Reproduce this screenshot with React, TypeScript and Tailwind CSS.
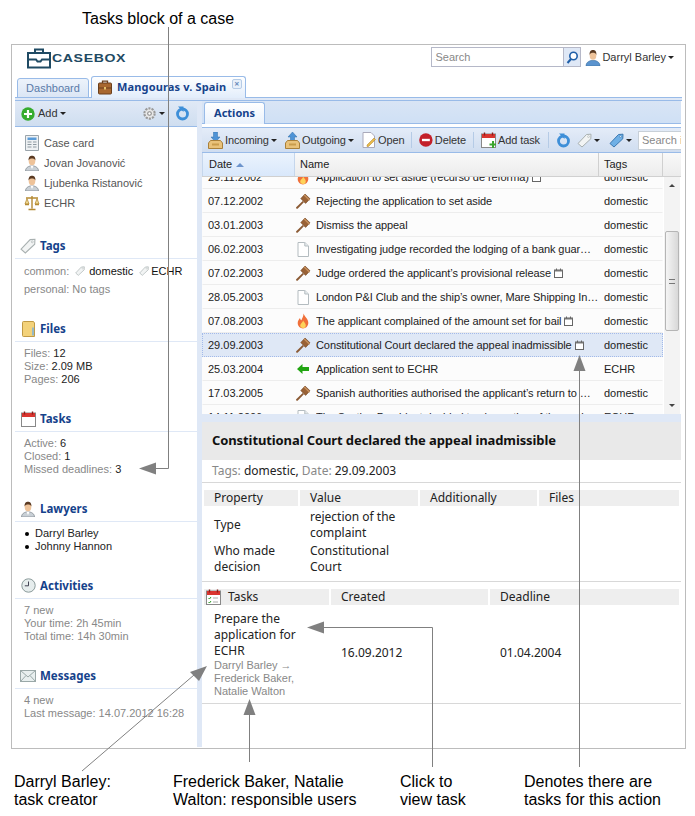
import type { ReactNode } from "react";

const Caret = () => <span className="inline-block ml-[2px] w-0 h-0 border-x-[3px] border-x-transparent border-t-[3px] border-t-[#222] align-middle shrink-0" />;

const Person = ({ s = 16 }: { s?: number }) => (
  <svg width={s} height={s} viewBox="0 0 16 16" className="shrink-0">
    <path d="M1.500 16c0-3 2-4.200 4.500-5h4c2.500.8 4.500 2 4.500 5z" fill="#c9d0d6" stroke="#7d858c" strokeWidth=".7" />
    <path d="M6.500 11l1.500 3 1.500-3z" fill="#fff" />
    <ellipse cx="8" cy="6" rx="3.300" ry="4.200" fill="#eec39a" />
    <path d="M4.600 5.500C4.400 2 6 .8 8 .8s3.600 1.200 3.400 4.700C10.800 3.800 9.500 3.400 8 3.400s-2.800.4-3.400 2.100z" fill="#5a3a22" />
  </svg>
);
const BluePerson = () => (
  <svg width="16" height="17" viewBox="0 0 16 17" className="shrink-0">
    <path d="M1 17c0-3.300 2.300-4.700 5-5.500h4c2.700.8 5 2.200 5 5.500z" fill="#5b94cf" stroke="#3d6e9f" strokeWidth=".6" />
    <ellipse cx="8" cy="6.500" rx="3.300" ry="4.300" fill="#eec39a" />
    <path d="M4.600 6C4.400 2.200 6 1 8 1s3.600 1.200 3.400 5C10.800 4.200 9.500 3.800 8 3.800S5.200 4.200 4.600 6z" fill="#5a3a22" />
  </svg>
);
const Gavel = () => (
  <svg width="16" height="16" viewBox="0 0 16 16" className="shrink-0">
    <path d="M1.200 14.200l6.500-6.200 1.200 1.300-6.300 6.400c-.8.600-1.900-.6-1.400-1.500z" fill="#8b5a34" />
    <path d="M5.800 5.600L10 1l5 4.800-4.400 4.600z" fill="#9a6236" stroke="#6e4122" strokeWidth=".6" />
    <path d="M9 1.800l5.600 5.400" stroke="#c99461" strokeWidth="1.200" />
  </svg>
);
const Doc = () => (
  <svg width="12" height="15" viewBox="0 0 12 15" className="shrink-0">
    <path d="M1 .5h6.800L11.500 4v10.500H1z" fill="#fff" stroke="#b4bcc0" />
    <path d="M7.800 .5V4h3.700" fill="#e5ebee" stroke="#b4bcc0" />
  </svg>
);
const Flame = () => (
  <svg width="12" height="16" viewBox="0 0 12 16" className="shrink-0">
    <path d="M6.500 .5c.8 3 4.800 5 4.800 9.300 0 3.500-2.500 5.700-5.300 5.700S.7 13.300.7 10.100C.7 7.800 2 6.500 3 5c.2 1.300.7 2 1.400 2.300C5 5.300 6.600 3.500 6.500 .5z" fill="#f0703a" />
    <path d="M6.200 7.500c.6 1.600 2.600 2.700 2.600 4.900 0 1.600-1.200 2.600-2.800 2.600s-2.800-1-2.800-2.500c0-1.800 2.600-3 3-5z" fill="#fdd35a" />
  </svg>
);
const GreenArrow = () => (
  <svg width="12" height="10" viewBox="0 0 12 10" className="shrink-0">
    <path d="M0 5l5.500-5v3H12v4H5.500v3z" fill="#22a512" />
  </svg>
);
const MiniCal = () => (
  <svg width="9" height="10" viewBox="0 0 9 10" className="shrink-0">
    <rect x=".5" y="2" width="8" height="7.500" fill="#fff" stroke="#666" />
    <path d="M.5 2h8v1.500h-8z" fill="#777" />
    <path d="M2.500 .5v2M6.500 .5v2" stroke="#666" />
  </svg>
);
const Calendar = ({ badge, check }: { badge?: boolean; check?: boolean }) => (
  <svg width="15" height="16" viewBox="0 0 15 16" className="shrink-0">
    <rect x=".5" y="2" width="14" height="13.500" fill="#fff" stroke="#888" />
    <rect x="1" y="2" width="13" height="4" fill="#d9352f" />
    <path d="M3.500 .5v3M11.500 .5v3" stroke="#8a1f1b" strokeWidth="1.400" />
    {check && <path d="M2.500 9l1 1 1.500-2M2.500 13l1 1 1.500-2" stroke="#2a9a22" fill="none" />}
    {check && <path d="M7 9h5M7 13h5" stroke="#aaa" />}
    {badge && <path d="M11 9h2v2.500h2v2h-2V16h-2v-2.500H8.500v-2H11z" fill="#3aa52e" />}
  </svg>
);
const Refresh = () => (
  <svg width="15" height="15" viewBox="0 0 15 15" className="shrink-0">
    <circle cx="7.500" cy="8" r="5" fill="none" stroke="#3e8fd8" strokeWidth="2.800" />
    <path d="M3 .5h5.500v5.500z" fill="#3e8fd8" />
  </svg>
);
const TagIcon = ({ fill = "#f2f4f4", stroke = "#a8b0b0", s = 15 }: { fill?: string; stroke?: string; s?: number }) => (
  <svg width={s} height={s} viewBox="0 0 15 15" className="shrink-0">
    <path d="M1 10.500L9.500 1.500 14 1.200l-.2 4.600L5 14z" fill={fill} stroke={stroke} />
    <circle cx="11.500" cy="3.600" r=".9" fill="#fff" stroke={stroke} strokeWidth=".6" />
  </svg>
);
const Tray = ({ up }: { up?: boolean }) => (
  <svg width="15" height="17" viewBox="0 0 15 17" className="shrink-0">
    <path d={up ? "M7.500 0L12 5H9.500v5h-4V5H3z" : "M5.500 0h4v5H12l-4.500 5L3 5h2.500z"} fill="#4e93d6" stroke="#2f6ea8" strokeWidth=".5" />
    <path d="M.5 11l2-2.500h10l2 2.500v5.500H.5z" fill="#e9c27a" stroke="#a9803a" />
    <path d="M4 11.500h7v2H4z" fill="#c99c4c" />
  </svg>
);
const CaseIcon = () => (
  <svg width="14" height="16" viewBox="0 0 14 16" className="shrink-0">
    <path d="M.5 .5h13v15H.5z" fill="#eef1f3" stroke="#9aa4ab" />
    <path d="M2.500 2.500h9v2.500h-9z" fill="#5a9bd8" />
    <path d="M2.500 7h4M8 7h3.500M2.500 9.500h4M8 9.500h3.500M2.500 12h4M8 12h3.500" stroke="#8f9aa1" />
  </svg>
);
const Scales = () => (
  <svg width="16" height="16" viewBox="0 0 16 16" className="shrink-0">
    <path d="M8 1v12.500M4.500 14.500h7M2 3h12" stroke="#b58a33" strokeWidth="1.400" fill="none" />
    <path d="M3 3.500L1 9h4zM13 3.500L11 9h4z" fill="#f0dc9a" stroke="#b58a33" strokeWidth=".8" />
    <path d="M1 9.500h4M11 9.500h4" stroke="#b58a33" strokeWidth="1.400" />
  </svg>
);
const Folder = () => (
  <svg width="13" height="16" viewBox="0 0 13 16" className="shrink-0">
    <path d="M.5 1.500a1 1 0 011-1h10l1 1.500v13.500h-11a1 1 0 01-1-1z" fill="#f3d27a" stroke="#c09a45" />
    <path d="M11 6.500v8" stroke="#7fb3d9" strokeWidth="1.600" />
  </svg>
);
const Clock = () => (
  <svg width="15" height="15" viewBox="0 0 15 15" className="shrink-0">
    <circle cx="7.500" cy="7.500" r="6.700" fill="#e6eded" stroke="#8a9a9a" />
    <path d="M7.500 3.500v4.300H3.800" stroke="#445" fill="none" />
  </svg>
);
const Mail = () => (
  <svg width="16" height="12" viewBox="0 0 16 12" className="shrink-0">
    <rect x=".5" y=".5" width="15" height="11" fill="#e8efef" stroke="#9aa8a8" />
    <path d="M.5 .5L8 7l7.500-6.500M.5 11.500L6 5.500M15.500 11.500L10 5.500" fill="none" stroke="#9aa8a8" />
  </svg>
);
const Gear = () => (
  <svg width="15" height="15" viewBox="0 0 14 14" className="shrink-0">
    <circle cx="7" cy="7" r="4.800" fill="#e8e8e8" stroke="#9a9a9a" strokeWidth="2" strokeDasharray="2 1" />
    <circle cx="7" cy="7" r="1.700" fill="#fff" stroke="#888" />
  </svg>
);
const AddIcon = () => (
  <svg width="14" height="14" viewBox="0 0 14 14" className="shrink-0">
    <circle cx="7" cy="7" r="6.700" fill="#36ac2e" />
    <path d="M7 3v8M3 7h8" stroke="#fff" strokeWidth="2.200" />
  </svg>
);
const Briefcase = () => (
  <svg width="14" height="15" viewBox="0 0 14 15" className="shrink-0">
    <path d="M4.500 3V1.200h5V3" fill="none" stroke="#6b3f1c" strokeWidth="1.300" />
    <rect x=".5" y="3" width="13" height="11" rx="1" fill="#a8672f" stroke="#6b3f1c" />
    <path d="M.5 8h13" stroke="#6b3f1c" />
    <rect x="6" y="7" width="2" height="2.500" fill="#e5c16b" />
  </svg>
);
const Logo = () => (
  <svg width="24" height="21" viewBox="0 0 24 21" className="shrink-0">
    <path d="M8 5V1.500h8V5" fill="none" stroke="#1f4a63" strokeWidth="2" />
    <rect x="1" y="5" width="22" height="14.500" fill="#fff" stroke="#1f4a63" strokeWidth="2" />
    <path d="M1 11.500h8l1.500 2h3l1.500-2h8" fill="none" stroke="#1f4a63" strokeWidth="2" />
  </svg>
);

const SectionHead = ({ icon, title, mt }: { icon: ReactNode; title: string; mt: string }) => (
  <div className={`${mt} h-[25px] flex items-center border-b border-[#dfe8f6] pb-[1px]`}>
    <span className="w-[20px] ml-[3px] flex justify-center shrink-0">{icon}</span>
    <span className="ml-[2px] text-[11.500px] font-bold text-[#15428b] font-['Noto_Sans',sans-serif]">{title}</span>
  </div>
);

const Stat = ({ k, v }: { k: string; v?: string }) => (
  <div className="h-[13px] leading-[13px] whitespace-nowrap">
    <span className="text-[#888]">{k}</span>
    {v && <span className="text-[#222]"> {v}</span>}
  </div>
);

const LeftPanel = () => (
  <div className="w-[182px] shrink-0 flex flex-col text-[11px] font-['Liberation_Sans',sans-serif]">
    <div className="h-[26px] flex items-center pl-[6px] pr-[7px] bg-gradient-to-b from-[#e0e9f6] to-[#cfdef0] border-b border-[#99bbe8]">
      <AddIcon />
      <span className="ml-[3px] text-[#333]">Add</span>
      <Caret />
      <span className="ml-auto flex items-center"><Gear /><Caret /></span>
      <span className="ml-[10px]"><Refresh /></span>
    </div>
    <div className="pt-[6px] text-[#555]">
      {[
        [<CaseIcon />, "Case card"],
        [<Person />, "Jovan Jovanović"],
        [<Person />, "Ljubenka Ristanović"],
        [<Scales />, "ECHR"],
      ].map(([icon, label], i) => (
        <div key={i} className="h-[20px] flex items-center pl-[9px]">
          <span className="w-[16px] flex justify-center">{icon}</span>
          <span className="ml-[4px]">{label}</span>
        </div>
      ))}
    </div>
    <SectionHead mt="mt-[21px]" icon={<TagIcon s={16} />} title="Tags" />
    <div className="pl-[9px] pt-[3px] h-[38px] text-[#888]">
      <div className="h-[18px] flex items-center">
        <span>common:</span>
        <span className="ml-[6px]"><TagIcon s={10} /></span>
        <span className="ml-[4px] text-[#111]">domestic</span>
        <span className="ml-[6px]"><TagIcon s={10} /></span>
        <span className="ml-[2px] text-[#111]">ECHR</span>
      </div>
      <div className="h-[18px] leading-[18px]">personal: No tags</div>
    </div>
    <SectionHead mt="mt-[20px]" icon={<Folder />} title="Files" />
    <div className="pl-[9px] pt-[5px] pb-[1px]">
      <Stat k="Files:" v="12" />
      <Stat k="Size:" v="2.09 MB" />
      <Stat k="Pages:" v="206" />
    </div>
    <SectionHead mt="mt-[20px]" icon={<Calendar />} title="Tasks" />
    <div className="pl-[9px] pt-[5px] pb-[1px]">
      <Stat k="Active:" v="6" />
      <Stat k="Closed:" v="1" />
      <Stat k="Missed deadlines:" v="3" />
    </div>
    <SectionHead mt="mt-[20px]" icon={<Person />} title="Lawyers" />
    <div className="pl-[10px] pt-[5px] pb-[1px] text-[#222]">
      {["Darryl Barley", "Johnny Hannon"].map((n) => (
        <div key={n} className="h-[13px] flex items-center">
          <span className="w-[4px] h-[4px] rounded-full bg-black mr-[6px]" />
          {n}
        </div>
      ))}
    </div>
    <SectionHead mt="mt-[20px]" icon={<Clock />} title="Activities" />
    <div className="pl-[9px] pt-[5px] pb-[1px]">
      <Stat k="7 new" />
      <Stat k="Your time: 2h 45min" />
      <Stat k="Total time: 14h 30min" />
    </div>
    <SectionHead mt="mt-[20px]" icon={<Mail />} title="Messages" />
    <div className="pl-[9px] pt-[5px] pb-[1px]">
      <Stat k="4 new" />
      <Stat k="Last message: 14.07.2012 16:28" />
    </div>
  </div>
);

const rows: [string, ReactNode, string, boolean, string][] = [
  ["29.11.2002", <Flame />, "Application to set aside (recurso de reforma)", true, "domestic"],
  ["07.12.2002", <Gavel />, "Rejecting the application to set aside", false, "domestic"],
  ["03.01.2003", <Gavel />, "Dismiss the appeal", false, "domestic"],
  ["06.02.2003", <Doc />, "Investigating judge recorded the lodging of a bank guar…", false, "domestic"],
  ["07.02.2003", <Gavel />, "Judge ordered the applicant’s provisional release", true, "domestic"],
  ["28.05.2003", <Doc />, "London P&I Club and the ship’s owner, Mare Shipping In…", false, "domestic"],
  ["07.08.2003", <Flame />, "The applicant complained of the amount set for bail", true, "domestic"],
  ["29.09.2003", <Gavel />, "Constitutional Court declared the appeal inadmissible", true, "domestic"],
  ["25.03.2004", <GreenArrow />, "Application sent to ECHR", false, "ECHR"],
  ["17.03.2005", <Gavel />, "Spanish authorities authorised the applicant’s return to …", false, "domestic"],
  ["14.11.2006", <Doc />, "The Section President decided to give notice of the appl…", false, "ECHR"],
];

const Tool = ({ icon, label, caret, cls }: { icon: ReactNode; label?: string; caret?: boolean; cls: string }) => (
  <div className={`${cls} flex items-center text-[#333] shrink-0 whitespace-nowrap`}>
    {icon}
    {label && <span className="ml-[2px] tracking-[-0.1px]">{label}</span>}
    {caret && <Caret />}
  </div>
);
const Sep = ({ cls }: { cls: string }) => <span className={`${cls} w-[1px] h-[16px] bg-[#b5cbe6] shrink-0`} />;

const ActionsGrid = () => (
  <div className="text-[11px] font-['Liberation_Sans',sans-serif]">
    <div className="h-[23px] flex items-end pl-[2px] bg-gradient-to-b from-[#d9e5f5] to-[#cfe0f5] border-b border-[#99bbe8]">
      <div className="w-[61px] h-[22px] -mb-[1px] rounded-t-[3px] border border-b-0 border-[#99bbe8] bg-gradient-to-b from-white to-[#eaf2fc] flex items-center justify-center font-bold text-[#15428b] font-['Noto_Sans',sans-serif]">Actions</div>
    </div>
    <div className="mt-[3px] h-[26px] flex items-center pl-[6px] overflow-hidden bg-gradient-to-b from-[#e4ecf8] to-[#cfddf0] border-y border-[#99bbe8]">
      <Tool icon={<Tray />} label="Incoming" caret cls="w-[77px]" />
      <Tool icon={<Tray up />} label="Outgoing" caret cls="w-[77px]" />
      <Tool icon={<svg width="14" height="16" viewBox="0 0 14 16"><path d="M1 .5h8l3.500 3.500v11.500H1z" fill="#fff" stroke="#aab" /><path d="M5 13l7-7 1.500 1.500-7 7H5z" fill="#e8b94a" stroke="#a8822a" strokeWidth=".5" /></svg>} label="Open" cls="w-[49px]" />
      <Sep cls="" />
      <Tool icon={<svg width="14" height="14" viewBox="0 0 14 14"><circle cx="7" cy="7" r="6.800" fill="#c3202a" /><path d="M3 7h8" stroke="#fff" strokeWidth="2.400" /></svg>} label="Delete" cls="ml-[7px] w-[47px]" />
      <Sep cls="ml-[7px]" />
      <Tool icon={<Calendar badge />} label="Add task" cls="ml-[7px] w-[60px]" />
      <Sep cls="ml-[7px]" />
      <Tool icon={<Refresh />} cls="ml-[7px] w-[21px]" />
      <Tool icon={<TagIcon />} caret cls="w-[32px]" />
      <Tool icon={<TagIcon fill="#6fb0e6" stroke="#3b78b0" />} caret cls="w-[29px]" />
      <div className="h-[19px] w-[60px] bg-white border border-[#c8d0d8] pl-[3px] leading-[17px] text-[#888] whitespace-nowrap shrink-0">Search in</div>
    </div>
    <div className="flex h-[24px] items-stretch border-b border-[#d0d0d0] bg-gradient-to-b from-[#f9f9f9] to-[#ececec] text-[#222]">
      <div className="w-[93px] pl-[6px] flex items-center gap-[4px] bg-gradient-to-b from-[#ebf3fd] to-[#d9e8fb] border-x border-[#c5d6ec]">
        Date <span className="w-0 h-0 border-x-[4px] border-x-transparent border-b-[4px] border-b-[#6d94cc]" />
      </div>
      <div className="w-[304px] pl-[5px] flex items-center border-r border-[#d0d0d0]">Name</div>
      <div className="w-[64px] pl-[5px] flex items-center border-r border-[#d0d0d0]">Tags</div>
    </div>
    <div className="flex h-[237px] overflow-hidden">
      <div className="w-[461px] shrink-0 overflow-hidden">
        <div className="-mt-[12px]">
          {rows.map(([date, icon, name, cal, tag]) => {
            const sel = date === "29.09.2003";
            return (
              <div key={date} className={`h-[24px] flex items-center border ${sel ? "bg-[#dfe8f6] border-dotted border-[#a3bae9]" : "bg-[#fcfcfc] border-transparent border-b-[#ededed]"}`}>
                <span className="w-[92px] pl-[5px] text-[#222]">{date}</span>
                <span className="w-[16px] flex justify-center shrink-0">{icon}</span>
                <span className="ml-[5px] w-[283px] flex items-center gap-[3px] text-[#222] whitespace-nowrap overflow-hidden tracking-[-0.08px]">{name}{cal && <MiniCal />}</span>
                <span className="pl-[5px] text-[#222]">{tag}</span>
              </div>
            );
          })}
        </div>
      </div>
      <div className="w-[16px] ml-[1px] bg-[#f3f3f3] flex flex-col items-center relative">
        <span className="mt-[7px] w-0 h-0 border-x-[3px] border-x-transparent border-b-[3px] border-b-[#444]" />
        <div className="mt-[44px] w-[14px] h-[100px] rounded-[2px] border border-[#b5b5b5] bg-gradient-to-r from-[#f5f5f5] to-[#d8d8d8] flex items-center justify-center">
          <span className="w-[6px] h-[5px] border-y-[1px] border-[#777]" />
        </div>
        <span className="mt-auto mb-[7px] w-0 h-0 border-x-[3px] border-x-transparent border-t-[3px] border-t-[#444]" />
      </div>
    </div>
  </div>
);

const HeadCell = ({ cls, children }: { cls: string; children: ReactNode }) => (
  <div className={`${cls} h-[16px] bg-[#eeeeee] flex items-center pl-[10px] text-[#222] leading-[16px]`}>{children}</div>
);

const Details = () => (
  <div className="text-[12px] text-[#222]">
    <div className="h-[8px] bg-[#dfe8f6]" />
    <div className="h-[38px] bg-[#e9e9e9] flex items-center pl-[10px] text-[13px] font-bold text-[#111] tracking-[-0.1px]">
      Constitutional Court declared the appeal inadmissible
    </div>
    <div className="h-[23px] flex items-center pl-[10px] border-b border-[#d8d8d8]">
      <span className="text-[#888]">Tags:</span>&nbsp;domestic,&nbsp;<span className="text-[#888]">Date:</span>&nbsp;29.09.2003
    </div>
    <div className="mt-[7px] px-[2px] flex gap-[2px]">
      <HeadCell cls="w-[94px]">Property</HeadCell>
      <HeadCell cls="w-[118px]">Value</HeadCell>
      <HeadCell cls="w-[117px]">Additionally</HeadCell>
      <HeadCell cls="w-[140px]">Files</HeadCell>
    </div>
    <div className="pl-[12px] leading-[16px]">
      <div className="flex items-center h-[34px] mt-[2px]">
        <span className="w-[96px]">Type</span>
        <span>rejection of the<br />complaint</span>
      </div>
      <div className="flex items-center h-[34px]">
        <span className="w-[96px]">Who made<br />decision</span>
        <span>Constitutional<br />Court</span>
      </div>
    </div>
    <div className="mt-[5px] border-t border-[#d8d8d8]" />
    <div className="mt-[7px] px-[2px] flex gap-[2px]">
      <HeadCell cls="w-[125px] !pl-[2px] gap-[7px]"><Calendar check />Tasks</HeadCell>
      <HeadCell cls="w-[157px]">Created</HeadCell>
      <HeadCell cls="w-[189px]">Deadline</HeadCell>
    </div>
    <div className="flex items-center border-b border-[#d8d8d8] h-[99px]">
      <div className="w-[129px] pl-[12px]">
        <div className="leading-[16px]">Prepare the<br />application for<br />ECHR</div>
        <div className="text-[11px] leading-[13px] text-[#888] font-['Liberation_Sans',sans-serif]">Darryl Barley →<br />Frederick Baker,<br />Natalie Walton</div>
      </div>
      <span className="ml-[10px] w-[159px] -mt-[3px]">16.09.2012</span>
      <span className="-mt-[3px]">01.04.2004</span>
    </div>
  </div>
);

const Arrows = () => (
  <svg width="695" height="816" viewBox="0 0 695 816" className="absolute inset-0 pointer-events-none">
    <g fill="none" stroke="#808080">
      <path d="M168.500 27v441.500H155" />
      <path d="M82 771l112-96" />
      <path d="M249.500 762v-48" />
      <path d="M432.500 767V627.500H323" />
      <path d="M579.500 767V369" />
    </g>
    <g fill="#808080">
      <path d="M139 468.500l17-6v12z" />
      <path d="M207 666l-17 6 9 9z" />
      <path d="M249.500 699l-6 16h12z" />
      <path d="M307 627.500l17-6v12z" />
      <path d="M579.500 355l-6 16h12z" />
    </g>
  </svg>
);

export default function App() {
  return (
    <div className="relative w-[695px] h-[816px] bg-white overflow-hidden font-['Noto_Sans',sans-serif]">
      <div className="h-[44px] pl-[82px] pt-[10px] text-[16px] leading-[18px] text-black font-['Liberation_Sans',sans-serif]">Tasks block of a case</div>
      <div className="ml-[11px] w-[675px] h-[705px] border border-[#bcbcbc] px-[3px] overflow-hidden">
        <div className="h-[31px] flex items-start text-[11px] font-['Liberation_Sans',sans-serif]">
          <div className="ml-[12px] mt-[3px] flex items-center gap-[1px]">
            <Logo />
            <span className="text-[11px] font-bold tracking-[0.5px] text-[#1f4a63] scale-x-[1.28] origin-left">CASEBOX</span>
          </div>
          <div className="ml-auto mt-[2px] flex items-center">
            <div className="w-[150px] h-[20px] flex border border-[#b5b8c8] bg-white">
              <span className="flex-1 pl-[3px] leading-[18px] text-[#888]">Search</span>
              <span className="w-[17px] flex items-center justify-center bg-[#dfe8f6] border-l border-[#b5b8c8]">
                <svg width="13" height="13" viewBox="0 0 13 13"><circle cx="7.500" cy="5" r="3.700" fill="#fff" stroke="#1f5fa8" strokeWidth="1.600" /><path d="M5 8l-3.500 4" stroke="#1f5fa8" strokeWidth="2" /></svg>
              </span>
            </div>
            <span className="ml-[4px]"><BluePerson /></span>
            <span className="ml-[1px] text-[#333]">Darryl Barley</span>
            <Caret />
            <span className="w-[8px]" />
          </div>
        </div>
        <div className="h-[22px] flex items-end pl-[2px] gap-[2px] text-[11px] border-b border-[#99bbe8]">
          <div className="w-[72px] h-[20px] -mb-[1px] rounded-t-[3px] border border-[#99bbe8] bg-gradient-to-b from-[#edf3fb] to-[#dbe6f5] flex items-center justify-center text-[#5a7ba8] font-['Liberation_Sans',sans-serif]">Dashboard</div>
          <div className="relative w-[155px] h-[22px] -mb-[1px] rounded-t-[3px] border border-b-0 border-[#99bbe8] bg-gradient-to-b from-white to-[#e2edfb] flex items-center pl-[6px] font-bold text-[#15428b] tracking-[0.15px]">
            <Briefcase />
            <span className="ml-[5px]">Mangouras v. Spain</span>
            <span className="absolute right-[3px] top-[2px] w-[10px] h-[10px] rounded-[2px] border border-[#b5cbe6] bg-[#e8f0fa] text-[9px] leading-[8px] text-center text-[#6a8cbb]">×</span>
          </div>
        </div>
        <div className="h-[3px] bg-[#dfe8f6] border-b border-[#99bbe8]" />
        <div className="flex h-[646px] overflow-hidden">
          <LeftPanel />
          <div className="w-[5px] bg-[#dfe8f6] shrink-0" />
          <div className="w-[479px] shrink-0 overflow-hidden">
            <ActionsGrid />
            <Details />
          </div>
        </div>
      </div>
      <div className="relative flex text-[16px] leading-[18px] text-black font-['Liberation_Sans',sans-serif] pt-[24px]">
        <div className="ml-[14px] w-[159px]">Darryl Barley:<br />task creator</div>
        <div className="w-[227px]">Frederick Baker, Natalie<br />Walton: responsible users</div>
        <div className="w-[124px]">Click to<br />view task</div>
        <div>Denotes there are<br />tasks for this action</div>
      </div>
      <Arrows />
    </div>
  );
}
